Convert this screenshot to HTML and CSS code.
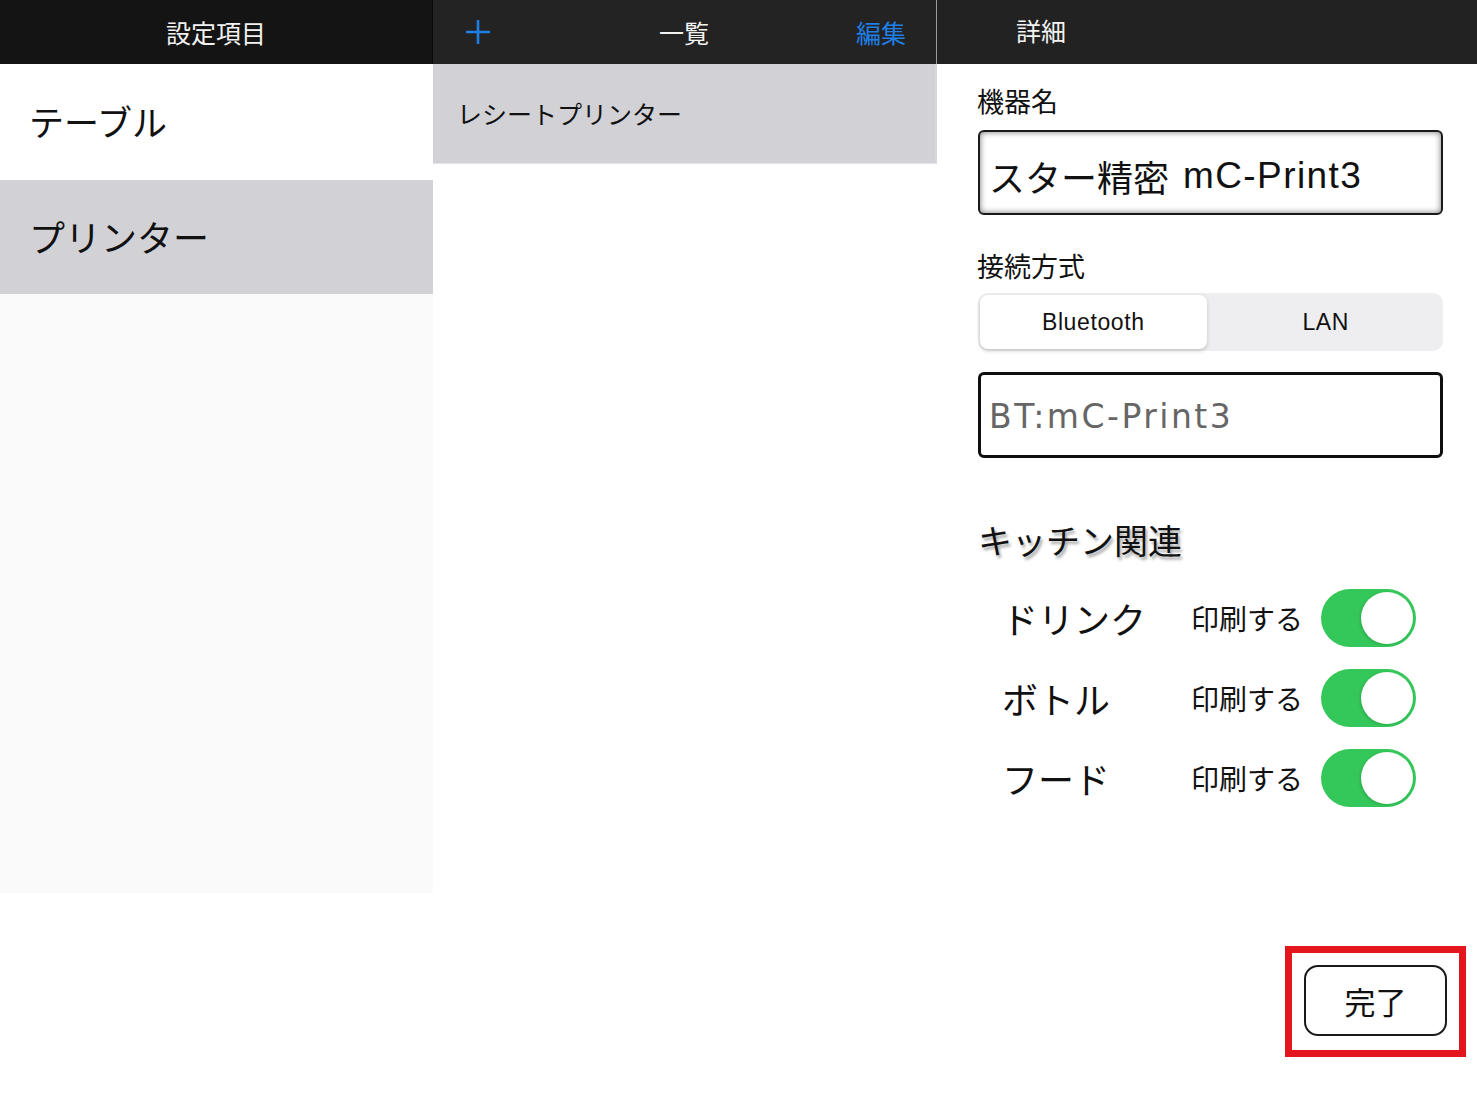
FILE: index.html
```html
<!DOCTYPE html>
<html lang="ja">
<head>
<meta charset="utf-8">
<link rel="stylesheet" href="styles.css">
</head>
<body>
<div class="app">
  <section class="col col-left">
    <header class="bar bar-left"><span class="bar-title">設定項目</span></header>
    <div class="row row-plain"><span class="row-text big">テーブル</span></div>
    <div class="row row-sel"><span class="row-text big">プリンター</span></div>
    <div class="fill"></div>
  </section>
  <section class="col col-mid">
    <header class="bar bar-mid">
      <svg class="plus" width="28" height="28" viewBox="0 0 28 28"><path d="M14 2V26M2 14H26" stroke="#1f7fe6" stroke-width="2.6" fill="none"/></svg>
      <span class="bar-title">一覧</span>
      <span class="bar-action">編集</span>
    </header>
    <div class="list-row"><span class="row-text mid">レシートプリンター</span></div>
  </section>
  <section class="col col-right">
    <header class="bar bar-right"><span class="bar-title">詳細</span></header>
    <div class="detail">
      <div class="label">機器名</div>
      <div class="field field-name">スター精密 <span class="latin">mC-Print3</span></div>
      <div class="label label-conn">接続方式</div>
      <div class="segment">
        <div class="seg seg-on">Bluetooth</div>
        <div class="seg">LAN</div>
      </div>
      <div class="field field-addr">BT:mC-Print3</div>
      <div class="section-title">キッチン関連</div>
      <div class="kitchen">
        <div class="k-row"><span class="k-name">ドリンク</span><span class="k-print">印刷する</span><span class="toggle"><span class="knob"></span></span></div>
        <div class="k-row"><span class="k-name">ボトル</span><span class="k-print">印刷する</span><span class="toggle"><span class="knob"></span></span></div>
        <div class="k-row"><span class="k-name">フード</span><span class="k-print">印刷する</span><span class="toggle"><span class="knob"></span></span></div>
      </div>
    </div>
    <div class="footer">
      <div class="highlight"><button class="done">完了</button></div>
    </div>
  </section>
</div>
</body>
</html>
```
FILE: styles.css
```css
* { box-sizing: border-box; }
html, body { margin: 0; padding: 0; background: #fff; }
body {
  font-family: "Liberation Sans", "Noto Sans CJK JP", sans-serif;
  color: #111;
  width: 1477px;
  height: 1108px;
  overflow: hidden;
}
.app {
  display: grid;
  grid-template-columns: 433px 504px 540px;
  height: 1108px;
}
.col { display: flex; flex-direction: column; min-width: 0; }
.bar {
  height: 64px;
  flex: none;
  display: flex;
  align-items: center;
  color: #f2f2f2;
}
.bar-title { font-size: 25px; }
.bar-left { background: #141414; justify-content: center; border-right: 1px solid #0a0a0a; }
.bar-mid {
  background: #232323;
  justify-content: space-between;
  padding: 0 30px 0 31px;
  border-right: 1px solid #9a9a9a;
}
.bar-mid .bar-title { margin-left: 20px; }
.bar-action { color: #1f7fe6; font-size: 25px; }
.bar-right { background: #222; padding-left: 79px; }
.bar-right .bar-title { margin-top: -4px; }
.row { display: flex; align-items: center; padding-left: 29px; }
.row-plain { height: 116px; background: #fff; }
.row-sel { height: 114px; background: #d1d1d6; }
.fill { height: 599px; background: #fafafa; }
.row-text.big { font-size: 36px; }
.row-plain .row-text { font-size: 35px; margin-top: -3px; }
.row-sel .row-text { margin-top: -2px; }
.list-row {
  height: 100px;
  background: #d1d1d6;
  display: flex;
  align-items: center;
  padding-left: 24px;
  border-bottom: 1px solid #e4e4e8;
  border-right: 2px solid #d8d8d8;
}
.row-text.mid { font-size: 25px; margin-top: -2px; }
.detail { padding: 22px 34px 0 41px; display: flex; flex-direction: column; }
.label { font-size: 27px; line-height: 34px; margin-left: -1px; }
.field {
  margin-top: 10px;
  height: 85px;
  border: 2px solid #1a1a1a;
  border-radius: 6px;
  display: flex;
  align-items: center;
  padding-left: 10px;
  font-size: 36px;
  white-space: pre;
}
.field-name {
  box-shadow: inset 0 0 6px rgba(0,0,0,0.55);
  padding-top: 6px;
  padding-left: 9px;
}
.latin { font-size: 37px; letter-spacing: 1.4px; margin-left: 4px; }
.label-conn { margin-top: 36px; }
.segment {
  margin-top: 8px;
  height: 58px;
  background: #eeeef0;
  border-radius: 10px;
  display: grid;
  grid-template-columns: 1fr 1fr;
  padding: 2px;
}
.seg {
  display: flex;
  align-items: center;
  justify-content: center;
  font-size: 23px;
  letter-spacing: 0.6px;
  border-radius: 8px;
}
.seg-on { background: #fff; box-shadow: 0 2px 4px rgba(0,0,0,0.18); margin-right: 4px; }
.field-addr {
  margin-top: 21px;
  height: 86px;
  border-width: 3px;
  border-color: #0f0f0f;
  color: #666;
  font-family: "DejaVu Sans", sans-serif;
  font-size: 33px;
  letter-spacing: 2.5px;
  padding-left: 8px;
  padding-top: 2px;
}
.section-title {
  margin-top: 62px;
  font-size: 34px;
  line-height: 44px;
  text-shadow: 2px 3px 3px rgba(0,0,0,0.35);
}
.kitchen { margin-top: 25px; padding-left: 24px; display: flex; flex-direction: column; gap: 22px; }
.k-row { display: flex; align-items: center; height: 58px; }
.k-name { width: 189px; font-size: 36px; }
.k-print { width: 130px; font-size: 28px; }
.toggle {
  width: 95px;
  height: 58px;
  border-radius: 29px;
  background: #34c759;
  display: flex;
  align-items: center;
  justify-content: flex-end;
  padding-right: 3px;
}
.knob {
  width: 52px;
  height: 52px;
  border-radius: 50%;
  background: #fff;
  box-shadow: -1px 1px 3px rgba(0,0,0,0.15);
}
.footer {
  margin-top: auto;
  display: flex;
  justify-content: flex-end;
  padding: 0 11px 51px 0;
}
.highlight {
  border: 7px solid #e3161e;
  padding: 12px 12px 14px 12px;
}
.done {
  width: 143px;
  height: 71px;
  border: 2px solid #1a1a1a;
  border-radius: 14px;
  background: #fff;
  font-size: 31px;
  font-family: "Noto Sans CJK JP", sans-serif;
  color: #111;
  padding: 0;
}
```
